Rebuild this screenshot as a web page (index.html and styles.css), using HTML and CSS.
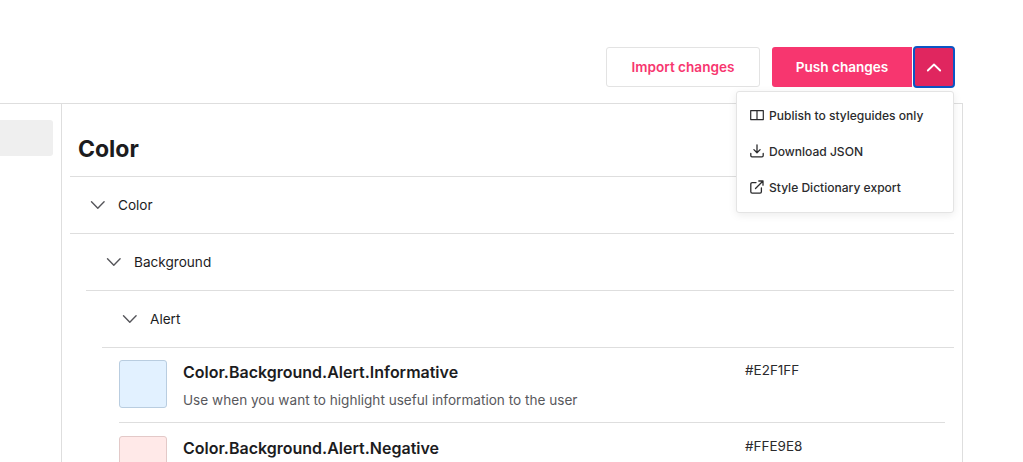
FILE: index.html
```html
<!DOCTYPE html>
<html lang="en">
<head>
<meta charset="utf-8">
<title>Color tokens</title>
<link rel="stylesheet" href="styles.css">
</head>
<body>
<header class="topbar">
  <div class="actions">
    <button class="btn btn-import">Import changes</button>
    <div class="split">
      <button class="btn btn-push">Push changes</button>
      <button class="btn btn-caret" aria-label="More">
        <svg width="16" height="16" viewBox="0 0 16 16" fill="none" stroke="#fff" stroke-width="1.8" stroke-linecap="round" stroke-linejoin="round"><path d="M1.800 11.500 8 5.500l6.200 6"/></svg>
      </button>
    </div>
  </div>
  <div class="menu">
    <div class="menu-item">
      <svg class="menu-icon" width="14" height="14" viewBox="0 0 14 14" fill="none" stroke="#2b2b2d" stroke-width="1.2" stroke-linejoin="round"><path d="M.7 2.600h12.600v9H.7zM7 2.600v9"/></svg>
      <span>Publish to styleguides only</span>
    </div>
    <div class="menu-item">
      <svg class="menu-icon" width="14" height="14" viewBox="0 0 14 14" fill="none" stroke="#2b2b2d" stroke-width="1.3" stroke-linecap="round" stroke-linejoin="round"><path d="M7 .8v7.800M3.900 5.600 7 8.700l3.100-3.100M.8 9.400v2.200c0 .7.500 1.200 1.200 1.200h10c.7 0 1.200-.5 1.200-1.200V9.400"/></svg>
      <span>Download JSON</span>
    </div>
    <div class="menu-item">
      <svg class="menu-icon" width="14" height="14" viewBox="0 0 14 14" fill="none" stroke="#2b2b2d" stroke-width="1.3" stroke-linecap="round" stroke-linejoin="round"><path d="M6 2.600H2.200c-.8 0-1.400.6-1.400 1.400v7.800c0 .8.600 1.400 1.400 1.400H10c.8 0 1.400-.6 1.400-1.400V8M5.500 8.500 13 1M8.800 1H13v4.200"/></svg>
      <span>Style Dictionary export</span>
    </div>
  </div>
</header>
<main class="layout">
  <aside class="sidebar"><div class="side-active"></div></aside>
  <section class="panel">
    <h1 class="title">Color</h1>
    <div class="row">
      <svg class="chev" width="16" height="16" viewBox="0 0 16 16" fill="none" stroke="#55555a" stroke-width="1.400" stroke-linecap="round" stroke-linejoin="round"><path d="M1.500 4.800 7.800 11.200l6.300-6.400"/></svg>
      <span>Color</span>
    </div>
    <div class="nest">
      <div class="row">
        <svg class="chev" width="16" height="16" viewBox="0 0 16 16" fill="none" stroke="#55555a" stroke-width="1.400" stroke-linecap="round" stroke-linejoin="round"><path d="M1.500 4.800 7.800 11.200l6.300-6.400"/></svg>
        <span>Background</span>
      </div>
      <div class="nest">
        <div class="row">
          <svg class="chev" width="16" height="16" viewBox="0 0 16 16" fill="none" stroke="#55555a" stroke-width="1.400" stroke-linecap="round" stroke-linejoin="round"><path d="M1.500 4.800 7.800 11.200l6.300-6.400"/></svg>
          <span>Alert</span>
        </div>
        <div class="nest">
          <div class="token">
            <div class="swatch swatch-info"></div>
            <div class="token-body">
              <div class="token-name">Color.Background.Alert.Informative</div>
              <div class="token-desc">Use when you want to highlight useful information to the user</div>
            </div>
            <div class="token-value">#E2F1FF</div>
          </div>
          <div class="token">
            <div class="swatch swatch-neg"></div>
            <div class="token-body">
              <div class="token-name">Color.Background.Alert.Negative</div>
            </div>
            <div class="token-value">#FFE9E8</div>
          </div>
        </div>
      </div>
    </div>
  </section>
</main>
</body>
</html>
```
FILE: styles.css
```css
* { box-sizing: border-box; }
html, body { margin: 0; height: 462px; overflow: hidden; background: #fff; }
body { font-family: Inter, "Liberation Sans", sans-serif; color: #1c1c1e; }

.topbar {
  position: relative;
  height: 104px;
  width: 963px;
  padding: 46px 8px 0 0;
  border-bottom: 1px solid #dedede;
}
.actions { display: flex; justify-content: flex-end; align-items: flex-start; gap: 12px; }
.split { display: flex; align-items: center; gap: 1px; }
.btn { font-family: inherit; font-size: 13.6px; font-weight: 600; border-radius: 3px; cursor: pointer; }
.btn-import { margin-top: 1px; width: 154px; height: 40px; background: #fff; color: #f7366f; border: 1px solid #e3e3e3; }
.btn-push { width: 140px; height: 40px; background: #f7366f; color: #fff; border: 0; border-radius: 3px 0 0 3px; }
.btn-caret {
  width: 42px; height: 42px; padding: 0; display: flex; align-items: center; justify-content: center;
  background: #e0265f; border: 2px solid #0b55c4; border-radius: 4px;
}

.menu {
  position: absolute; left: 736px; top: 91px; width: 218px; height: 122px;
  padding: 5px 0; background: #fff; border: 1px solid #e4e4e4; border-radius: 3px;
  box-shadow: 0 2px 8px rgba(0,0,0,.08); z-index: 2;
}
.menu-item { height: 36px; display: flex; align-items: center; gap: 5px; padding-left: 13px; font-size: 12.05px; font-weight: 500; color: #2b2b2d; }
.menu-icon { flex: none; }

.layout { display: flex; width: 963px; height: 358px; }
.sidebar { width: 62px; flex: none; border-right: 1px solid #dedede; padding-top: 16px; }
.side-active { width: 53px; height: 36px; background: #efefef; border-radius: 0 3px 3px 0; }
.panel { flex: 1; border-right: 1px solid #dedede; padding: 0 8px; overflow: hidden; }
.title { margin: 0; height: 73px; padding: 29px 0 0 8px; font-size: 23px; line-height: 32px; font-weight: 700; color: #1c1c1e; border-bottom: 1px solid #dedede; }
.nest { padding-left: 16px; }
.nest .nest .nest { padding-left: 17px; padding-right: 9px; }
.row {
  height: 57px; display: flex; align-items: center; gap: 12px; padding-left: 20px;
  border-bottom: 1px solid #dedede; font-size: 13.6px; color: #1c1c1e;
}
.row .chev { flex: none; }
.token { display: flex; height: 75px; padding-top: 12px; border-bottom: 1px solid #dedede; }
.token + .token { padding-top: 13px; }
.swatch { width: 48px; height: 48px; flex: none; border-radius: 3px; border: 1px solid; }
.swatch-info { background: #e2f1ff; border-color: #b9cde0; }
.swatch-neg { background: #ffe9e8; border-color: #e3c9c8; }
.token-body { flex: 1; padding-left: 16px; }
.token-name { font-size: 16px; line-height: 24px; font-weight: 600; color: #1c1c1e; }
.token-desc { font-size: 13.6px; line-height: 20px; margin-top: 6px; color: #58585c; }
.token-value { width: 200px; font-size: 13.5px; line-height: 20px; color: #2b2b2d; }
```
